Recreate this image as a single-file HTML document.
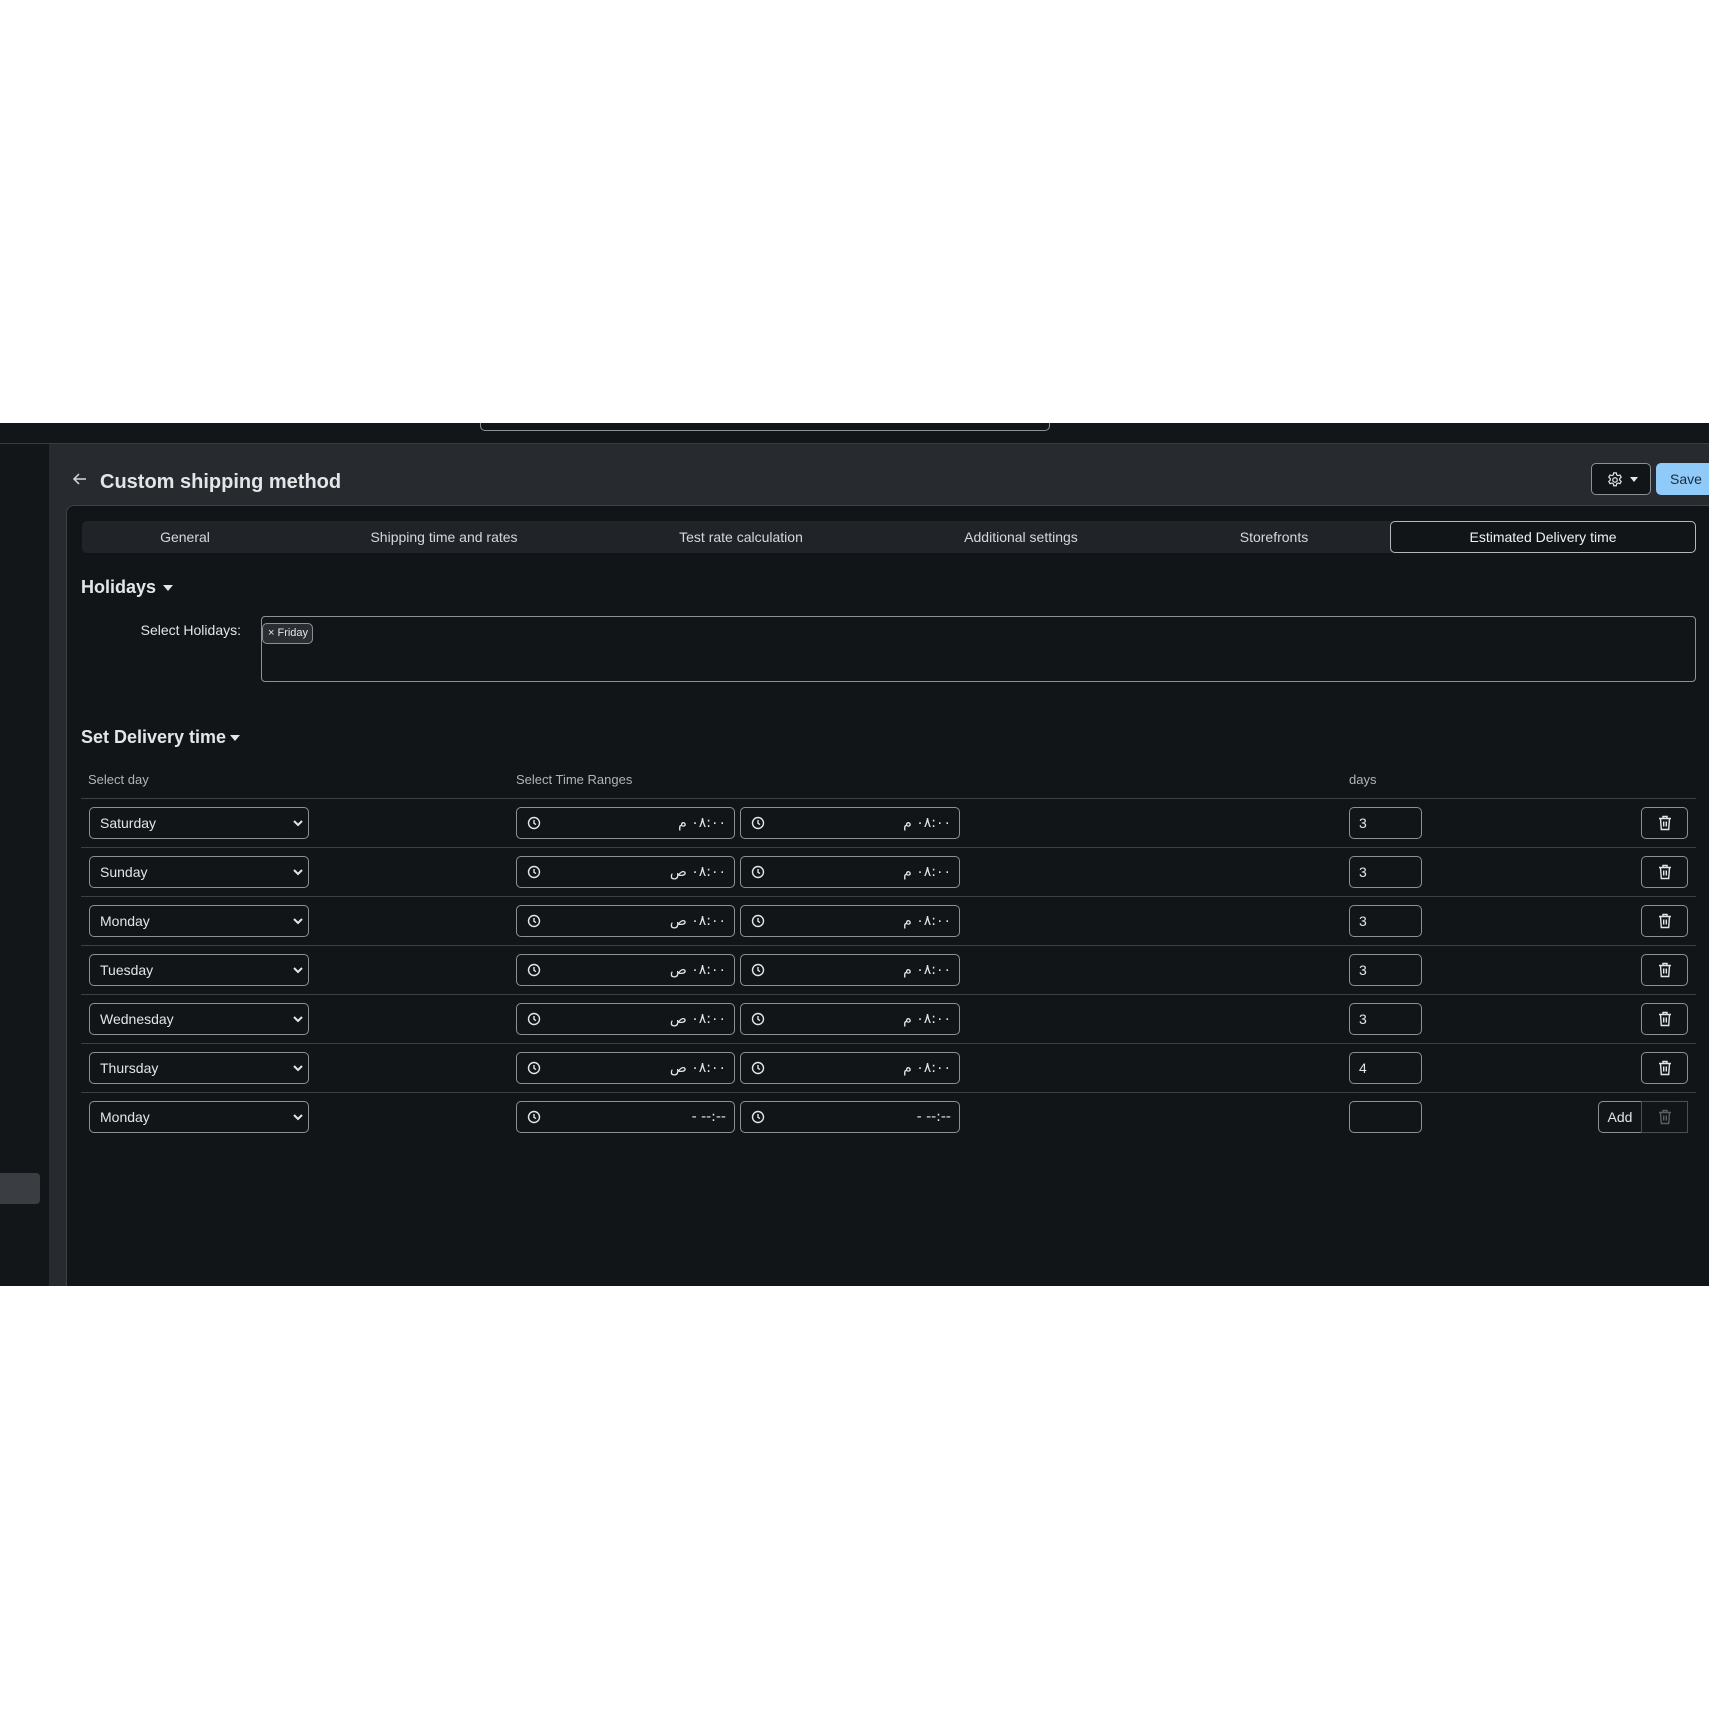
<!DOCTYPE html>
<html><head><meta charset="utf-8"><style>
*{box-sizing:border-box;margin:0;padding:0}
body{width:1709px;height:1710px;background:#fff;position:relative;overflow:hidden;font-family:"Liberation Sans","DejaVu Sans",sans-serif;color:#e3e5e7}
.a{position:absolute}
.ctl{position:absolute;height:32px;border:1px solid #8d9196;border-radius:5px;background:#121518;font-size:14px;display:flex;align-items:center}
.line{position:absolute;left:81px;width:1615px;height:1px;background:#3c4146}
.clk{position:absolute;left:10px;top:8px}
.tv{position:absolute;right:8px;top:7px;font-size:14px;direction:rtl;font-family:"DejaVu Sans",sans-serif}
.tab{position:absolute;top:521px;height:32px;line-height:32px;font-size:14px;color:#d6d8da;transform:translateX(-50%)}
</style></head><body>
<div class="a" style="left:0;top:423px;width:1709px;height:21px;background:#131619"></div>
<div class="a" style="left:480px;top:423px;width:570px;height:8px;border:1px solid #8d9196;border-top:none;border-radius:0 0 5px 5px"></div>
<div class="a" style="left:0;top:443px;width:1709px;height:1px;background:#3a3e43"></div>
<div class="a" style="left:0;top:444px;width:49px;height:842px;background:#131619"></div>
<div class="a" style="left:0;top:1173px;width:40px;height:31px;background:#3a3e43;border-radius:0 4px 4px 0"></div>
<div class="a" style="left:49px;top:444px;width:1660px;height:842px;background:#272a2e"></div>
<div class="a" style="left:66px;top:505px;width:1643px;height:781px;background:#121518;border-radius:8px 0 0 0;border-top:1px solid #3c4146;border-left:1px solid #3c4146"></div>
<svg class="a" style="left:72px;top:471px" width="16" height="16" viewBox="0 0 16 16"><path d="M14 8H2M7 3L2 8l5 5" stroke="#d6d8da" stroke-width="1.5" fill="none"/></svg>
<div class="a" style="left:100px;top:471px;font-size:20px;font-weight:bold;color:#e3e5e7">Custom shipping method</div>
<div class="a" style="left:1591px;top:463px;width:60px;height:32px;border:1px solid #8d9196;border-radius:5px;background:#121518">
<svg class="a" style="left:14px;top:7px" width="18" height="18" viewBox="0 0 24 24" fill="none" stroke="#e3e5e7" stroke-width="1.6"><circle cx="12" cy="12" r="3"/><path d="M10.3 2.5h3.4l.5 2.6 1.9 1.1 2.5-.9 1.7 2.9-2 1.8v2.2l2 1.8-1.7 2.9-2.5-.9-1.9 1.1-.5 2.6h-3.4l-.5-2.6-1.9-1.1-2.5.9-1.7-2.9 2-1.8v-2.2l-2-1.8 1.7-2.9 2.5.9 1.9-1.1z"/></svg>
<div class="a" style="left:38px;top:13px;border:4px solid transparent;border-top:5px solid #e3e5e7"></div></div>
<div class="a" style="left:1656px;top:463px;width:60px;height:32px;border-radius:5px;background:#90caf9;color:#1b2b3a;font-size:14px;line-height:32px;padding-left:14px">Save</div>
<div class="a" style="left:82px;top:521px;width:1614px;height:32px;background:#202428;border-radius:5px"></div>
<div class="a" style="left:1390px;top:521px;width:306px;height:32px;background:#121518;border:1px solid #b5b8bb;border-radius:5px"></div>
<div class="tab" style="left:185px">General</div>
<div class="tab" style="left:444px">Shipping time and rates</div>
<div class="tab" style="left:741px">Test rate calculation</div>
<div class="tab" style="left:1021px">Additional settings</div>
<div class="tab" style="left:1274px">Storefronts</div>
<div class="tab" style="left:1543px;color:#f0f1f2">Estimated Delivery time</div>
<div class="a" style="left:81px;top:577px;font-size:18px;font-weight:bold;color:#e3e5e7">Holidays</div>
<div class="a" style="left:163px;top:585px;border:5px solid transparent;border-top:6px solid #e3e5e7"></div>
<div class="a" style="left:100px;top:622px;width:141px;text-align:right;font-size:14px">Select Holidays:</div>
<div class="a" style="left:261px;top:616px;width:1435px;height:66px;border:1px solid #8d9196;border-radius:4px"></div>
<div class="a" style="left:262px;top:623px;width:51px;height:21px;border:1px solid #8d9196;border-radius:5px;background:#2a2e33;font-size:11px;line-height:19px;padding-left:5px">× Friday</div>
<div class="a" style="left:81px;top:727px;font-size:18px;font-weight:bold;color:#e3e5e7">Set Delivery time</div>
<div class="a" style="left:230px;top:735px;border:5px solid transparent;border-top:6px solid #e3e5e7"></div>
<div class="a" style="left:88px;top:772px;font-size:13px;color:#b0b4b8">Select day</div>
<div class="a" style="left:516px;top:772px;font-size:13px;color:#b0b4b8">Select Time Ranges</div>
<div class="a" style="left:1349px;top:772px;font-size:13px;color:#b0b4b8">days</div>
<div id="rows"></div>
<script>
var rows=[["Saturday","٠٨:٠٠ م","٠٨:٠٠ م","3"],["Sunday","٠٨:٠٠ ص","٠٨:٠٠ م","3"],["Monday","٠٨:٠٠ ص","٠٨:٠٠ م","3"],["Tuesday","٠٨:٠٠ ص","٠٨:٠٠ م","3"],["Wednesday","٠٨:٠٠ ص","٠٨:٠٠ م","3"],["Thursday","٠٨:٠٠ ص","٠٨:٠٠ م","4"],["Monday","- --:--","- --:--",""]];
var clk='<svg class="clk" width="14" height="14" viewBox="0 0 14 14" fill="none" stroke="#e3e5e7" stroke-width="1.4"><circle cx="7" cy="7" r="5.5"/><path d="M7 4v3.3l2 1.3"/></svg>';
var trash=function(c){return '<svg width="14" height="16" viewBox="0 0 14 16" fill="none" stroke="'+c+'" stroke-width="1.4"><path d="M1 3.5h12M5 3.5V1.5h4v2M2.5 3.5l.8 11h7.4l.8-11M5.7 6.5v5M8.3 6.5v5"/></svg>'};
var h='';
rows.forEach(function(r,i){
 var y=798+i*49, cy=y+9;
 h+='<div class="line" style="top:'+y+'px"></div>';
 h+='<div class="ctl" style="left:89px;top:'+cy+'px;width:220px;padding-left:10px">'+r[0]+'<svg style="position:absolute;right:5px;top:12px" width="10" height="7" viewBox="0 0 10 7"><path d="M1 1l4 4 4-4" stroke="#e3e5e7" stroke-width="2" fill="none"/></svg></div>';
 var dir=i==6?'ltr':'rtl';
 h+='<div class="ctl" style="left:516px;top:'+cy+'px;width:219px">'+clk+'<span class="tv" style="direction:'+dir+'">'+r[1]+'</span></div>';
 h+='<div class="ctl" style="left:740px;top:'+cy+'px;width:220px">'+clk+'<span class="tv" style="direction:'+dir+'">'+r[2]+'</span></div>';
 h+='<div class="ctl" style="left:1349px;top:'+cy+'px;width:73px;padding-left:9px">'+r[3]+'</div>';
 if(i<6){h+='<div class="ctl" style="left:1641px;top:'+cy+'px;width:47px;justify-content:center">'+trash('#e3e5e7')+'</div>';}
 else{h+='<div class="ctl" style="left:1598px;top:'+cy+'px;width:44px;border-radius:5px 0 0 5px;justify-content:center;font-size:14px">Add</div><div class="ctl" style="left:1641px;top:'+cy+'px;width:47px;border-radius:0;border-color:#4a4f54;justify-content:center">'+trash('#5a5f64')+'</div>';}
});
document.getElementById('rows').innerHTML=h;
</script>
<div class="a" style="left:0;top:1286px;width:1709px;height:424px;background:#fff"></div>
</body></html>
